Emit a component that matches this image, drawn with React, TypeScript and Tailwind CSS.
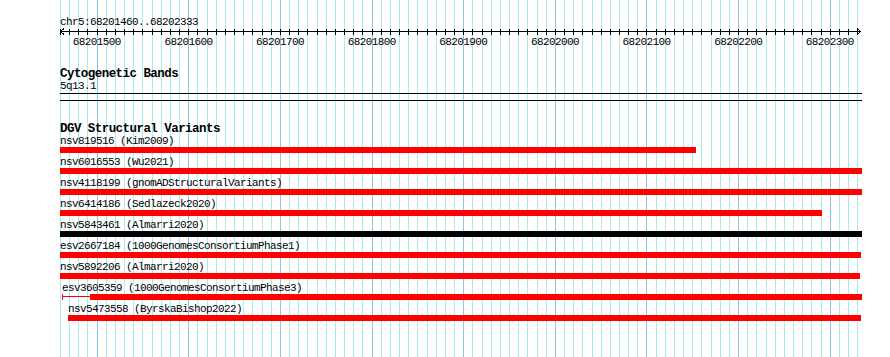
const START = 68201460;
const END = 68202333;
const PX_PER_BP = 800 / (END - START);

const toX = (pos: number) => Math.round((pos - START) * PX_PER_BP);

type Feature = {
  label: string;
  start: number;
  end: number;
  color: string;
  labelLeft?: number;
  stub?: number;
};

// start/end are pixel offsets from the left edge of the track area
const features: Feature[] = [
  { label: "nsv819516 (Kim2009)", start: 0, end: 636, color: "#ff0000" },
  { label: "nsv6016553 (Wu2021)", start: 0, end: 802, color: "#ff0000" },
  { label: "nsv4118199 (gnomADStructuralVariants)", start: 0, end: 802, color: "#ff0000" },
  { label: "nsv6414186 (Sedlazeck2020)", start: 0, end: 762, color: "#ff0000" },
  { label: "nsv5843461 (Almarri2020)", start: 0, end: 802, color: "#000000" },
  { label: "esv2667184 (1000GenomesConsortiumPhase1)", start: 0, end: 801, color: "#ff0000" },
  { label: "nsv5892206 (Almarri2020)", start: 0, end: 800, color: "#ff0000" },
  { label: "esv3605359 (1000GenomesConsortiumPhase3)", start: 30, end: 802, color: "#ff0000", labelLeft: 2, stub: 2 },
  { label: "nsv5473558 (ByrskaBishop2022)", start: 8, end: 801, color: "#ff0000", labelLeft: 8 },
];

const gridLines = Array.from({ length: 88 }, (_, i) => {
  const pos = START + i * 10;
  return { x: toX(pos), major: pos % 100 === 0, pos };
});

function Grid() {
  return (
    <svg className="absolute inset-0" width={890} height={357} shapeRendering="crispEdges">
      {gridLines.map((g) => (
        <line
          key={g.pos}
          x1={60 + g.x + 0.5}
          x2={60 + g.x + 0.5}
          y1={0}
          y2={357}
          stroke={g.major ? "#8ac6e8" : "#abebf0"}
          strokeWidth={1}
        />
      ))}
    </svg>
  );
}

function Ruler() {
  return (
    <div>
      <div className="h-[28px] pt-4 text-[11px] tracking-[-0.6px] leading-[12px]">chr5:68201460..68202333</div>
      <svg width={802} height={8} className="block" shapeRendering="crispEdges">
        <line x1={0} x2={801} y1={3.5} y2={3.5} stroke="#000" />
        {gridLines.map((g) => (
          <line key={g.pos} x1={g.x + 0.5} x2={g.x + 0.5} y1={1} y2={7} stroke="#000" />
        ))}
        <polyline points="4,0.5 0.5,3.5 4,6.5" fill="none" stroke="#000" />
        <polyline points="797,0.5 800.5,3.5 797,6.5" fill="none" stroke="#000" />
      </svg>
      <div className="flex h-[12px] -ml-[9px] text-[11px] tracking-[-0.6px] leading-[12px]">
        {gridLines
          .filter((g) => g.major)
          .map((g) => (
            <span key={g.pos} className="w-[91.64px] shrink-0 text-center">
              {g.pos}
            </span>
          ))}
      </div>
    </div>
  );
}

function FeatureRow({ f }: { f: Feature }) {
  return (
    <div className="mb-[3px]">
      <div
        className="h-[12px] text-[11px] tracking-[-0.6px] leading-[12px] whitespace-nowrap"
        style={{ paddingLeft: f.labelLeft ?? 0 }}
      >
        {f.label}
      </div>
      <div className="flex h-[6px] items-start" style={{ paddingLeft: f.stub ?? f.start }}>
        {f.stub !== undefined && (
          <>
            <div className="h-[6px] w-px shrink-0 bg-[#ff0000]" />
            <div className="mt-[2px] h-px shrink-0 bg-[#ff0000]" style={{ width: f.start - f.stub - 1 }} />
          </>
        )}
        <div className="h-[6px] shrink-0" style={{ width: f.end - f.start, background: f.color }} />
      </div>
    </div>
  );
}

export default function App() {
  return (
    <div className="relative w-[890px] h-[357px] overflow-hidden bg-white font-['Liberation_Mono',monospace] text-black">
      <Grid />
      <div className="relative w-[802px] ml-[60px]">
        <Ruler />

        <div className="mt-[21px] h-[11px] text-[12.5px] tracking-[-0.55px] font-bold leading-[11px]">
          Cytogenetic Bands
        </div>
        <div className="mt-[1px] h-[10px] text-[11px] tracking-[-0.6px] leading-[10px]">5q13.1</div>
        <div className="mt-[2px] h-[8px] border-y border-black" />

        <div className="mt-[23px] h-[11px] text-[12.5px] tracking-[-0.55px] font-bold leading-[11px]">
          DGV Structural Variants
        </div>
        {features.map((f) => (
          <FeatureRow key={f.label} f={f} />
        ))}
      </div>
    </div>
  );
}
